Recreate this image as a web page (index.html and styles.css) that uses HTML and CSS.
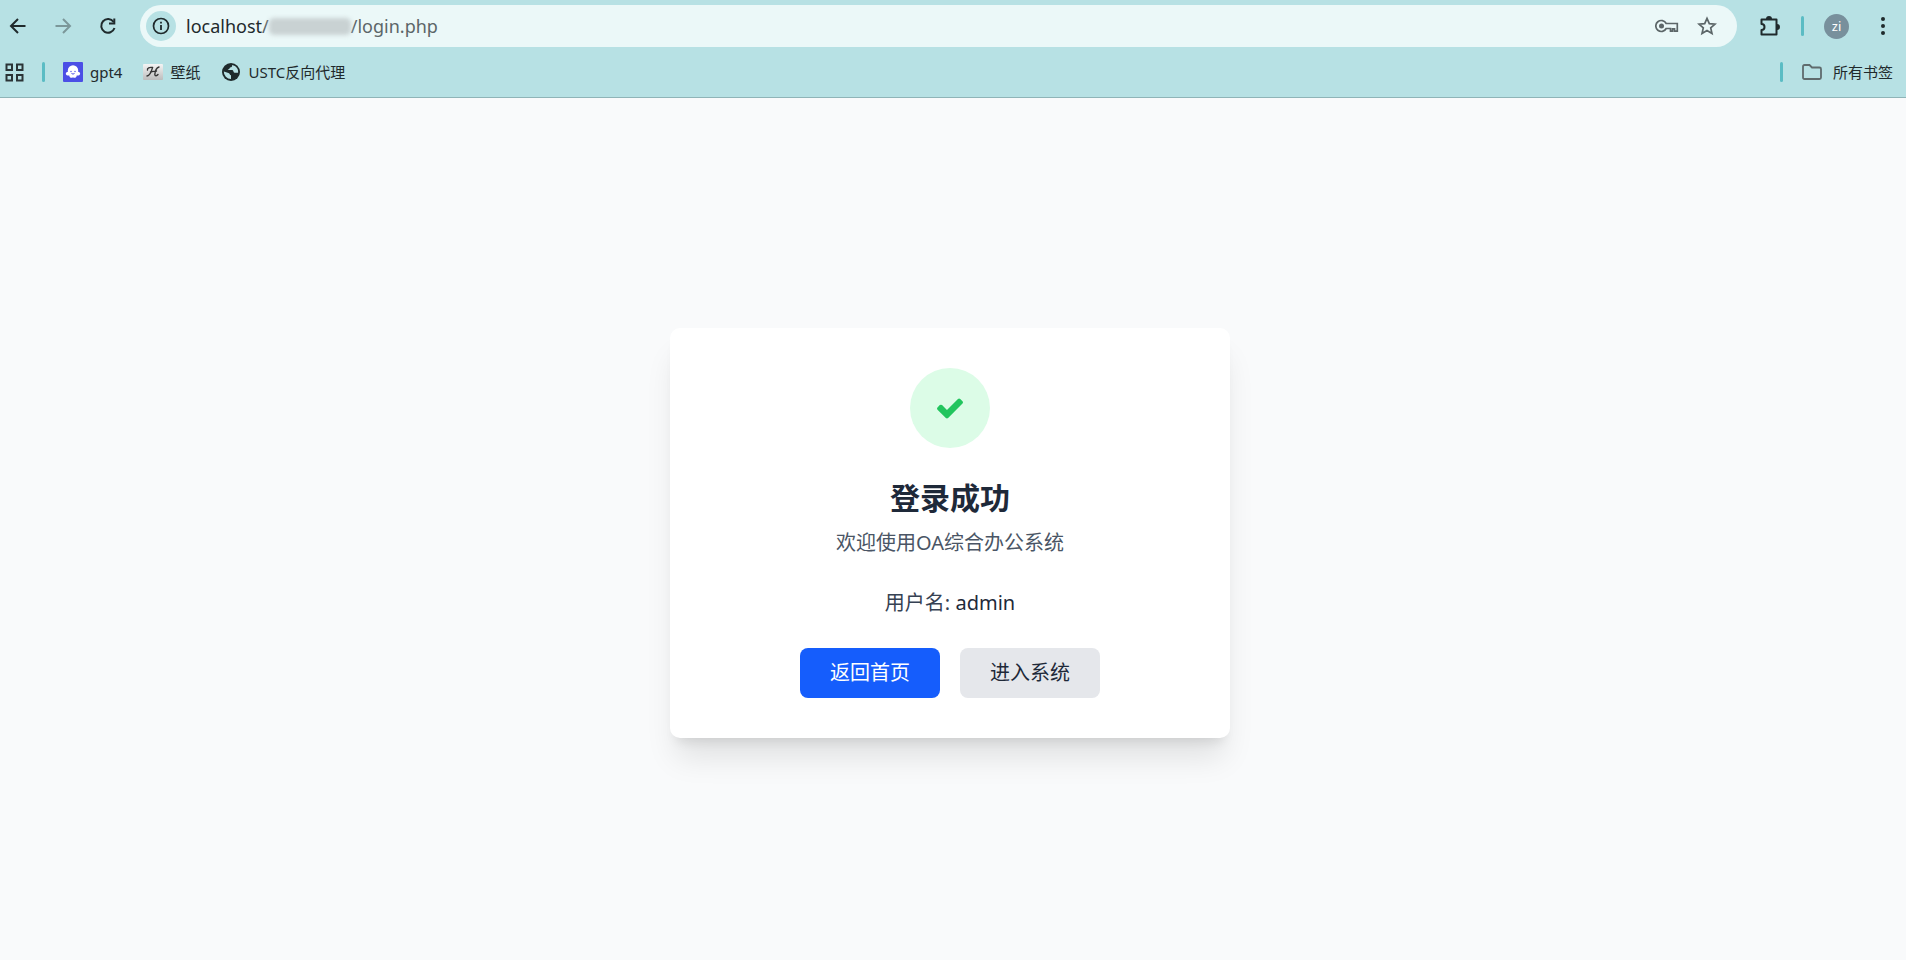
FILE: index.html
```html
<!DOCTYPE html>
<html lang="zh-CN">
<head>
    <meta charset="UTF-8">
    <meta name="viewport" content="width=device-width, initial-scale=1.0">
    <title>登录成功</title>
    <link rel="stylesheet" href="styles.css">
</head>
<body>
    <header class="browser">
        <div class="toolbar">
            <div class="nav">
                <button class="icon-btn" aria-label="后退">
                    <svg width="20" height="20" viewBox="0 0 20 20"><path d="M17.500 10H3.500M10 3L3 10l7 7" fill="none" stroke="#1f2a2c" stroke-width="2"/></svg>
                </button>
                <button class="icon-btn" aria-label="前进">
                    <svg width="20" height="20" viewBox="0 0 20 20"><path d="M2.500 10h14M10 3l7 7-7 7" fill="none" stroke="#7b9799" stroke-width="2"/></svg>
                </button>
                <button class="icon-btn" aria-label="刷新">
                    <svg width="20" height="20" viewBox="0 0 20 20"><path d="M16.500 12A6.800 6.800 0 1 1 15.600 6" fill="none" stroke="#1f2a2c" stroke-width="2"/><path d="M17.300 2.500v6h-6.300v-2h4.300v-4z" fill="#1f2a2c"/></svg>
                </button>
            </div>
            <div class="address">
                <button class="site-info" aria-label="网站信息">
                    <svg width="18" height="18" viewBox="0 0 18 18"><circle cx="9" cy="9" r="7.500" fill="none" stroke="#1f2a2c" stroke-width="1.700"/><path d="M9 8v5M9 4.800v1.800" stroke="#1f2a2c" stroke-width="1.800"/></svg>
                </button>
                <div class="url" role="textbox" aria-label="地址"><span class="host">localhost</span>/<span class="masked"></span>/login.php</div>
                <button class="address-btn" aria-label="密码">
                    <svg width="24" height="16" viewBox="0 0 24 16"><path d="M11.200 5.500A5.500 5.500 0 1 0 11.200 10.500H15.500V13.200H17.500V10.800H19.500V13.200H22.300V5.500Z" fill="none" stroke="#5c6668" stroke-width="1.700"/><circle cx="6.500" cy="8" r="2.500" fill="#5c6668"/></svg>
                </button>
                <button class="address-btn" aria-label="收藏">
                    <svg width="20" height="20" viewBox="0 0 20 20"><path d="M10 2.300l2.300 5.300 5.800.5-4.400 3.800 1.300 5.700-5-3-5 3 1.300-5.700-4.400-3.800 5.800-.5z" fill="none" stroke="#5c6668" stroke-width="1.700"/></svg>
                </button>
            </div>
            <div class="actions">
                <button class="icon-btn" aria-label="扩展程序">
                    <svg width="24" height="24" viewBox="0 0 24 24"><path d="M3.500 5.500h15v15h-15v-4.500a3 3 0 0 0 0-6z" fill="none" stroke="#1f2a2c" stroke-width="2" stroke-linejoin="round"/><path d="M8 5a3 3 0 0 1 6 0zM19 10a3 3 0 0 1 0 6z" fill="#1f2a2c"/></svg>
                </button>
                <span class="divider"></span>
                <button class="avatar">zi</button>
                <button class="icon-btn" aria-label="菜单">
                    <svg width="20" height="20" viewBox="0 0 20 20" fill="#1f2a2c"><circle cx="10" cy="3" r="2"/><circle cx="10" cy="10" r="2"/><circle cx="10" cy="17" r="2"/></svg>
                </button>
            </div>
        </div>
        <nav class="bookmarks">
            <button class="apps" aria-label="应用">
                <svg width="19" height="19" viewBox="0 0 19 19" fill="none" stroke="#2b3436" stroke-width="2"><path d="M1.500 1.500h5.500v5.500H1.500zM12 1.500h5.500v5.500h-5.500zM1.500 12h5.500v5.500H1.500zM12 12h5.500v5.500h-5.500z"/></svg>
            </button>
            <span class="divider"></span>
            <div class="bookmark-list">
                <a class="bookmark" href="#">
                    <svg width="20" height="20" viewBox="0 0 20 20"><rect width="20" height="20" rx="1" fill="#4b4fe6"/><path d="M4.800 8.500a5.200 5.200 0 0 1 10.400 0v1.500c2 0 2.700 2.200 1 3.200-1 .600-2 .400-2.500.300 0 2-2.200 3-3.700 1.800-1.500 1.200-3.700.2-3.700-1.800-.5.100-1.500.3-2.500-.3-1.700-1-1-3.200 1-3.200z" fill="#fff"/><circle cx="8" cy="9.500" r=".7" fill="#4b4fe6"/><circle cx="12" cy="9.500" r=".7" fill="#4b4fe6"/><path d="M8.500 11.500q1.500 1.200 3 0" fill="none" stroke="#4b4fe6"/></svg>
                    <span>gpt4</span>
                </a>
                <a class="bookmark" href="#">
                    <svg width="20" height="20" viewBox="0 0 20 20"><defs><linearGradient id="paper" x2="0" y2="1"><stop stop-color="#f4f4f4"/><stop offset="1" stop-color="#bcbcbc"/></linearGradient></defs><rect y="2" width="20" height="16" rx="1" fill="url(#paper)"/><path d="M4.500 8c-.5-2 2-3 5-2.500-.8 3-2 8-5.500 8.500M16 5c-3 1-4 5-4.200 7.500 .2 1.800 2 1.500 3.200 0M7.500 10c2.500-.7 4-.5 6-1" fill="none" stroke="#353535" stroke-width="1.400" stroke-linecap="round"/></svg>
                    <span>壁纸</span>
                </a>
                <a class="bookmark" href="#">
                    <svg width="20" height="20" viewBox="0 0 20 20"><circle cx="10" cy="10" r="9" fill="#1f2a2c"/><path d="M2.800 9.500l4.700 1.500c1.500.5 1 2 2.500 2.300V17A7.200 7.200 0 0 1 2.800 9.500zM11 2.900c.5 1.500-.3 2.300-2 2.600-.5 1.500-1.500 1.500-2.300 2.500h4.800c1.300.7.600 2.500 2 2.800h3.600c.5-3.500-1.500-7-6.100-7.900z" fill="#b7e1e4"/></svg>
                    <span>USTC反向代理</span>
                </a>
            </div>
            <div class="all-bookmarks">
                <span class="divider"></span>
                <a class="bookmark" href="#">
                    <svg width="22" height="18" viewBox="0 0 22 18"><path d="M2 3.500q0-1.500 1.500-1.500h5l2.500 2.500h7.500q1.500 0 1.500 1.500v8.500q0 1.500-1.500 1.500h-15q-1.500 0-1.500-1.500z" fill="none" stroke="#5f6b6d" stroke-width="1.800"/></svg>
                    <span>所有书签</span>
                </a>
            </div>
        </nav>
    </header>

    <main class="page">
        <div class="card">
            <div class="status">
                <svg width="30" height="30" viewBox="0 0 1792 1792"><path d="M1671 566q0 40-28 68l-724 724-136 136q-28 28-68 28t-68-28l-136-136-362-362q-28-28-28-68t28-68l136-136q28-28 68-28t68 28l294 295 656-657q28-28 68-28t68 28l136 136q28 28 28 68z" fill="#22c55e"/></svg>
            </div>
            <h1 class="title">登录成功</h1>
            <p class="subtitle">欢迎使用OA综合办公系统</p>
            <p class="user">用户名: <span class="user-name">admin</span></p>
            <div class="buttons">
                <button class="btn btn-primary">返回首页</button>
                <button class="btn btn-secondary">进入系统</button>
            </div>
        </div>
    </main>
</body>
</html>
```
FILE: styles.css
```css
* {
    box-sizing: border-box;
}
body {
    display: flex;
    flex-direction: column;
    min-height: 100vh;
    margin: 0;
    font-family: "Noto Sans", "Noto Sans CJK SC", sans-serif;
    background-color: #f9fafb;
}
button {
    padding: 0;
    border: none;
    background: none;
    font-family: inherit;
    cursor: pointer;
}
svg {
    display: block;
    flex-shrink: 0;
}

/* browser bar */
.browser {
    background-color: #b7e1e4;
    border-bottom: 1px solid #8fb4b7;
}
.toolbar {
    display: flex;
    align-items: center;
    gap: 15px;
    padding: 5px 6px 5px 0;
}
.nav {
    display: flex;
    gap: 10px;
}
.icon-btn {
    display: flex;
    align-items: center;
    justify-content: center;
    width: 35px;
    height: 35px;
}
.address {
    display: flex;
    flex: 1;
    align-items: center;
    height: 42px;
    padding: 0 10px 0 6px;
    border-radius: 21px;
    background-color: #ebf8f8;
}
.site-info {
    display: flex;
    align-items: center;
    justify-content: center;
    width: 30px;
    height: 30px;
    border-radius: 50%;
    background-color: #b7e1e4;
}
.url {
    display: flex;
    flex: 1;
    align-items: center;
    margin-left: 10px;
    font-size: 18px;
    color: #5c6668;
}
.host {
    color: #1f2a2c;
}
.masked {
    width: 82px;
    height: 17px;
    border-radius: 5px;
    background-color: #c9d2d3;
    filter: blur(2px);
}
.address-btn {
    display: flex;
    align-items: center;
    justify-content: center;
    width: 40px;
    height: 30px;
}
.actions {
    display: flex;
    align-items: center;
    gap: 14px;
}
.divider {
    width: 3px;
    height: 20px;
    border-radius: 2px;
    background-color: #5bbcc4;
}
.avatar {
    width: 25px;
    height: 25px;
    margin: 0 2px 0 6px;
    border-radius: 50%;
    background-color: #78909c;
    font-size: 13px;
    color: #fff;
}
.bookmarks {
    display: flex;
    align-items: center;
    gap: 18px;
    height: 45px;
    padding: 0 13px 5px 5px;
}
.bookmark-list {
    display: flex;
    gap: 21px;
}
.bookmark {
    display: flex;
    align-items: center;
    gap: 7px;
    font-size: 15px;
    line-height: 20px;
    color: #1f2a2c;
    text-decoration: none;
}
.all-bookmarks {
    display: flex;
    align-items: center;
    gap: 18px;
    margin-left: auto;
}
.all-bookmarks .bookmark {
    gap: 10px;
}

/* login result */
.page {
    display: flex;
    flex: 1;
    align-items: center;
    justify-content: center;
    padding: 8px 6px 0 0;
}
.card {
    display: flex;
    flex-direction: column;
    align-items: center;
    width: 100%;
    max-width: 560px;
    padding: 40px;
    border-radius: 10px;
    background-color: #fff;
    box-shadow: 0 25px 31px -6px rgba(0, 0, 0, 0.1), 0 10px 12px -7px rgba(0, 0, 0, 0.1);
    font-size: 20px;
    line-height: 30px;
}
.status {
    display: flex;
    align-items: center;
    justify-content: center;
    width: 80px;
    height: 80px;
    margin-bottom: 30px;
    border-radius: 50%;
    background-color: #dcfce7;
}
.title {
    margin: 0 0 10px;
    font-size: 30px;
    line-height: 40px;
    color: #1e2939;
}
.subtitle {
    margin: 0 0 30px;
    color: #4a5565;
}
.user {
    margin: 0 0 30px;
    color: #364153;
}
.user-name {
    color: #1e2939;
}
.buttons {
    display: flex;
    gap: 20px;
}
.btn {
    padding: 10px 30px;
    border-radius: 8px;
    font-size: 20px;
    line-height: 30px;
}
.btn-primary {
    background-color: #155dfc;
    color: #fff;
}
.btn-secondary {
    background-color: #e5e7eb;
    color: #1e2939;
}
```
